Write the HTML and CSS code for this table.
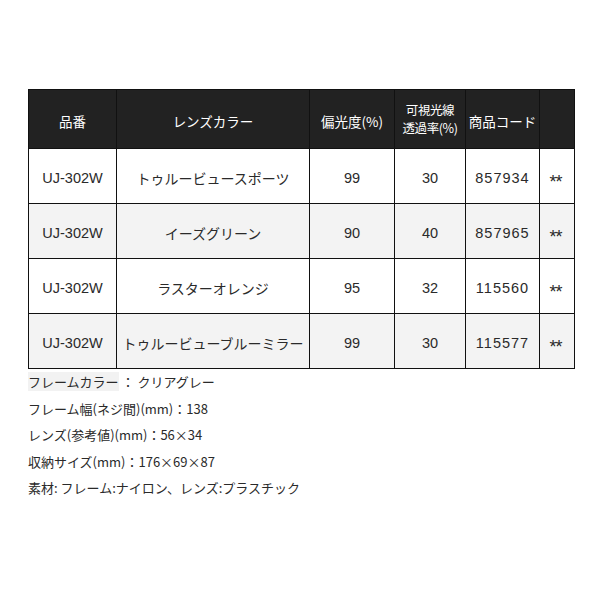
FILE: index.html
```html
<!DOCTYPE html>
<html lang="ja">
<head>
<meta charset="utf-8">
<link rel="stylesheet" href="styles.css">
</head>
<body>
<div class="wrap">
  <table class="spec">
    <colgroup>
      <col class="c1"><col class="c2"><col class="c3"><col class="c4"><col class="c5"><col class="c6">
    </colgroup>
    <thead>
      <tr>
        <th>品番</th>
        <th>レンズカラー</th>
        <th>偏光度(%)</th>
        <th class="two">可視光線<br>透過率(%)</th>
        <th>商品コード</th>
        <th></th>
      </tr>
    </thead>
    <tbody>
      <tr>
        <td class="num">UJ-302W</td><td>トゥルービュースポーツ</td><td class="num">99</td><td class="num">30</td><td class="num code">857934</td><td class="mark">**</td>
      </tr>
      <tr class="alt">
        <td class="num">UJ-302W</td><td>イーズグリーン</td><td class="num">90</td><td class="num">40</td><td class="num code">857965</td><td class="mark">**</td>
      </tr>
      <tr>
        <td class="num">UJ-302W</td><td>ラスターオレンジ</td><td class="num">95</td><td class="num">32</td><td class="num code">115560</td><td class="mark">**</td>
      </tr>
      <tr class="alt">
        <td class="num">UJ-302W</td><td>トゥルービューブルーミラー</td><td class="num">99</td><td class="num">30</td><td class="num code">115577</td><td class="mark">**</td>
      </tr>
    </tbody>
  </table>
  <div class="notes">
    <p><span class="hl">フレームカラー</span> ： クリアグレー</p>
    <p>フレーム幅(ネジ間)(mm)：138</p>
    <p>レンズ(参考値)(mm)：56×34</p>
    <p>収納サイズ(mm)：176×69×87</p>
    <p>素材: フレーム:ナイロン、レンズ:プラスチック</p>
  </div>
</div>
</body>
</html>
```
FILE: styles.css
```css
html, body {
  margin: 0;
  padding: 0;
  background: #fff;
}
body {
  font-family: "Noto Sans CJK JP", "Liberation Sans", sans-serif;
  color: #2a2a2a;
}
.wrap {
  padding: 89px 0 0 28px;
}
.spec {
  border-collapse: collapse;
  table-layout: fixed;
  width: 546px;
  font-size: 14px;
}
.c1 { width: 88px; }
.c2 { width: 193px; }
.c3 { width: 85px; }
.c4 { width: 71px; }
.c5 { width: 74px; }
.c6 { width: 35px; }
.spec th,
.spec td {
  border: 1px solid #111;
  text-align: center;
  vertical-align: middle;
  padding: 0;
  font-weight: normal;
  white-space: nowrap;
}
.spec thead th {
  background: #222;
  color: #fff;
  height: 54px;
  padding-top: 4px;
  line-height: 17px;
  font-size: 13.5px;
  border-color: #111;
}
.spec thead th.two {
  padding-top: 0;
  height: 58px;
  line-height: 18.5px;
  font-size: 12.5px;
  letter-spacing: -0.4px;
}
.spec tbody td {
  height: 51px;
  padding-top: 3px;
  line-height: 18px;
}
.spec tbody tr.alt td {
  background: #f3f3f3;
}
.spec td.num {
  font-family: "Liberation Sans", "Noto Sans CJK JP", sans-serif;
  font-size: 14.5px;
}
.spec td.code {
  letter-spacing: 1px;
}
.spec tbody td.mark {
  font-family: "Liberation Sans", sans-serif;
  font-size: 18px;
  padding-top: 11px;
  height: 43px;
  letter-spacing: -1px;
  padding-right: 3px;
}
.notes {
  font-size: 13px;
  line-height: 26.5px;
}
.notes p {
  margin: 0;
}
.hl {
  background: #f2f2f2;
}
```
